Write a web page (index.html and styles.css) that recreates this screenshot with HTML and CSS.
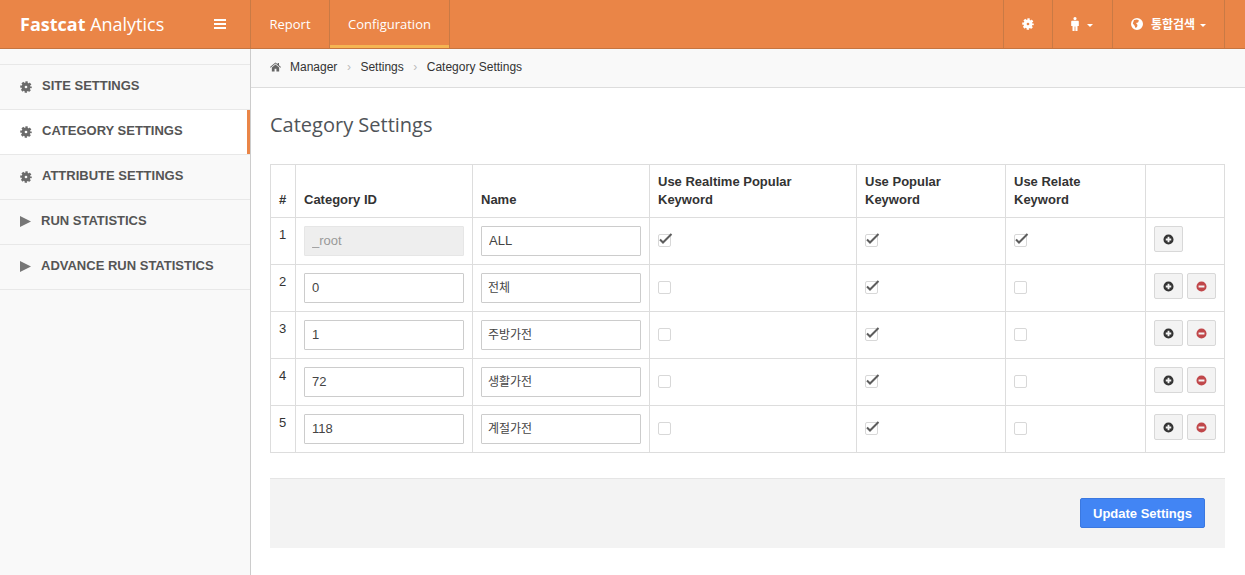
FILE: index.html
```html
<!DOCTYPE html>
<html lang="ko">
<head>
<meta charset="utf-8">
<title>Fastcat Analytics</title>
<link rel="stylesheet" href="styles.css">
</head>
<body>
<svg class="defs" width="0" height="0" aria-hidden="true">
  <defs>
    <symbol id="gear" viewBox="0 0 16 16">
      <circle cx="8" cy="8" r="3.900" fill="none" stroke="currentColor" stroke-width="4.200" />
      <circle cx="8" cy="8" r="6.200" fill="none" stroke="currentColor" stroke-width="3" stroke-dasharray="2.900 1.970" stroke-dashoffset="1.450" />
    </symbol>
    <symbol id="play" viewBox="0 0 11 11"><path d="M0 0 11 5.500 0 11z" fill="currentColor"/></symbol>
    <symbol id="plus" viewBox="0 0 12 12"><path fill="currentColor" fill-rule="evenodd" d="M6 .5a5.500 5.500 0 1 0 0 11 5.500 5.500 0 0 0 0-11zM5 3h2v2h2v2H7v2H5V7H3V5h2z"/></symbol>
    <symbol id="minus" viewBox="0 0 12 12"><path fill="currentColor" fill-rule="evenodd" d="M6 .5a5.500 5.500 0 1 0 0 11 5.500 5.500 0 0 0 0-11zM2.800 5h6.400v2H2.800z"/></symbol>
    <symbol id="tick" viewBox="0 0 15 13"><path d="M2 7.500 5 10.500 13.500 2" fill="none" stroke="currentColor" stroke-width="2"/></symbol>
  </defs>
</svg>

<header class="topbar">
  <div class="brand">
    <span class="logo"><b>Fastcat</b> Analytics</span>
    <svg class="bars" viewBox="0 0 12 10" width="12" height="10"><path d="M0 0h12v2H0zM0 4h12v2H0zM0 8h12v2H0z" fill="currentColor"/></svg>
  </div>
  <nav class="nav">
    <a class="nav-link nav-report">Report</a>
    <a class="nav-link nav-config is-active">Configuration</a>
  </nav>
  <div class="tools">
    <a class="tool tool-gear"><svg class="ico-12"><use href="#gear"/></svg></a>
    <a class="tool tool-user">
      <svg viewBox="1 0 8 14" width="8" height="14"><path fill="currentColor" d="M5 0a1.600 1.600 0 1 1 0 3.200A1.600 1.600 0 0 1 5 0zM2.300 3.800h5.400c.7 0 1.100.4 1.100 1V9H7.500v5H5.400V9.500h-.8V14H2.500V9H1.200V4.800c0-.6.400-1 1.100-1z"/></svg>
      <i class="caret"></i>
    </a>
    <a class="tool tool-search">
      <svg viewBox="0 0 12 12" width="12" height="12"><path fill="currentColor" fill-rule="evenodd" d="M6 0a6 6 0 1 0 0 12A6 6 0 0 0 6 0zM3 2 6 1.500 8 2.500 7 4.500 5 5 6.500 7 6 9 4.500 10 3.500 7.500 1.800 5.500z"/></svg>
      <span class="tool-text">통합검색</span>
      <i class="caret"></i>
    </a>
  </div>
</header>

<div class="layout">
  <aside class="sidebar">
    <ul class="menu">
      <li class="menu-item"><svg class="menu-gear"><use href="#gear"/></svg>SITE SETTINGS</li>
      <li class="menu-item is-active"><svg class="menu-gear"><use href="#gear"/></svg>CATEGORY SETTINGS</li>
      <li class="menu-item"><svg class="menu-gear"><use href="#gear"/></svg>ATTRIBUTE SETTINGS</li>
      <li class="menu-item"><svg class="menu-play"><use href="#play"/></svg>RUN STATISTICS</li>
      <li class="menu-item"><svg class="menu-play"><use href="#play"/></svg>ADVANCE RUN STATISTICS</li>
    </ul>
  </aside>

  <main class="main">
    <div class="crumbs">
      <svg class="home" viewBox="0 0 12 10" width="11" height="10"><path fill="currentColor" d="M6 0 0 5l.6.700L6 1.300l5.400 4.400L12 5 9.800 3.200V.6H8.300v1.300zM6 2.200 2 5.500V10h3V7h2v3h3V5.500z"/></svg>
      <span class="crumb">Manager</span><span class="sep">›</span>
      <span class="crumb">Settings</span><span class="sep">›</span>
      <span class="crumb">Category Settings</span>
    </div>
    <div class="content">
      <h1 class="title">Category Settings</h1>
      <table class="grid">
        <colgroup>
          <col class="c-num"><col class="c-id"><col class="c-name"><col class="c-real"><col class="c-pop"><col class="c-rel"><col class="c-act">
        </colgroup>
        <thead>
          <tr>
            <th>#</th><th>Category ID</th><th>Name</th>
            <th>Use Realtime Popular<br>Keyword</th>
            <th>Use Popular<br>Keyword</th>
            <th>Use Relate<br>Keyword</th>
            <th></th>
          </tr>
        </thead>
        <tbody>
          <tr>
            <td>1</td>
            <td><input class="field" value="_root" disabled></td>
            <td><input class="field" value="ALL"></td>
            <td class="cc"><span class="check"><svg class="tick"><use href="#tick"/></svg></span></td>
            <td class="cc"><span class="check"><svg class="tick"><use href="#tick"/></svg></span></td>
            <td class="cc"><span class="check"><svg class="tick"><use href="#tick"/></svg></span></td>
            <td><div class="acts"><button class="btn"><svg class="btn-ico"><use href="#plus"/></svg></button></div></td>
          </tr>
          <tr>
            <td>2</td>
            <td><input class="field" value="0"></td>
            <td><input class="field field-ko" value="전체"></td>
            <td class="cc"><span class="check"></span></td>
            <td class="cc"><span class="check"><svg class="tick"><use href="#tick"/></svg></span></td>
            <td class="cc"><span class="check"></span></td>
            <td><div class="acts"><button class="btn"><svg class="btn-ico"><use href="#plus"/></svg></button><button class="btn btn-del"><svg class="btn-ico"><use href="#minus"/></svg></button></div></td>
          </tr>
          <tr>
            <td>3</td>
            <td><input class="field" value="1"></td>
            <td><input class="field field-ko" value="주방가전"></td>
            <td class="cc"><span class="check"></span></td>
            <td class="cc"><span class="check"><svg class="tick"><use href="#tick"/></svg></span></td>
            <td class="cc"><span class="check"></span></td>
            <td><div class="acts"><button class="btn"><svg class="btn-ico"><use href="#plus"/></svg></button><button class="btn btn-del"><svg class="btn-ico"><use href="#minus"/></svg></button></div></td>
          </tr>
          <tr>
            <td>4</td>
            <td><input class="field" value="72"></td>
            <td><input class="field field-ko" value="생활가전"></td>
            <td class="cc"><span class="check"></span></td>
            <td class="cc"><span class="check"><svg class="tick"><use href="#tick"/></svg></span></td>
            <td class="cc"><span class="check"></span></td>
            <td><div class="acts"><button class="btn"><svg class="btn-ico"><use href="#plus"/></svg></button><button class="btn btn-del"><svg class="btn-ico"><use href="#minus"/></svg></button></div></td>
          </tr>
          <tr>
            <td>5</td>
            <td><input class="field" value="118"></td>
            <td><input class="field field-ko" value="계절가전"></td>
            <td class="cc"><span class="check"></span></td>
            <td class="cc"><span class="check"><svg class="tick"><use href="#tick"/></svg></span></td>
            <td class="cc"><span class="check"></span></td>
            <td><div class="acts"><button class="btn"><svg class="btn-ico"><use href="#plus"/></svg></button><button class="btn btn-del"><svg class="btn-ico"><use href="#minus"/></svg></button></div></td>
          </tr>
        </tbody>
      </table>
      <div class="form-actions"><button class="primary">Update Settings</button></div>
    </div>
  </main>
</div>
</body>
</html>
```
FILE: styles.css
```css
* { box-sizing: border-box; }
html, body { margin: 0; height: 100%; overflow: hidden; }
body {
  font-family: "Liberation Sans", "Noto Sans CJK KR", Arial, sans-serif;
  font-size: 13px;
  color: #333;
  background: #fff;
  display: flex;
  flex-direction: column;
}
.defs { position: absolute; }

/* top bar */
.topbar {
  flex: 0 0 49px;
  display: flex;
  background: #ea8547;
  border-bottom: 1px solid #c57440;
  color: #fff;
  font-family: "Open Sans", "Noto Sans CJK KR", sans-serif;
}
.brand {
  flex: 0 0 251px;
  display: flex;
  align-items: center;
  justify-content: space-between;
  padding: 0 24px 0 20px;
  border-right: 1px solid #c97a45;
}
.logo { font-size: 18px; line-height: 48px; }
.logo b { font-weight: 700; }
.bars { color: #fff; margin-bottom: 1px; }
.nav { display: flex; }
.nav-link {
  display: flex;
  align-items: center;
  justify-content: center;
  font-size: 13px;
  border-right: 1px solid #c97a45;
  height: 48px;
}
.nav-report { width: 79px; }
.nav-config { width: 120px; }
.nav-link.is-active { box-shadow: inset 0 -3px 0 #f6b552; }
.tools { margin-left: auto; display: flex; margin-right: 20px; }
.tool {
  display: flex;
  align-items: center;
  height: 48px;
  border-left: 1px solid #c97a45;
}
.tool-gear { width: 49px; justify-content: center; }
.tool-user { width: 60px; padding-left: 18px; gap: 8px; }
.tool-search { width: 113px; padding-left: 18px; gap: 8px; border-right: 1px solid #c97a45; }
.tool-text { font-size: 12px; font-weight: 700; margin-right: -3px; }
.ico-12 { width: 12px; height: 12px; }
.caret {
  width: 0;
  height: 0;
  margin-top: 2px;
  border-left: 3px solid transparent;
  border-right: 3px solid transparent;
  border-top: 3px solid #fff;
}

/* layout */
.layout { flex: 1; display: flex; min-height: 0; }
.sidebar {
  flex: 0 0 251px;
  background: #f9f9f9;
  border-right: 1px solid #ccc;
  padding-top: 15px;
}
.menu {
  list-style: none;
  margin: 0;
  padding: 0;
  border-top: 1px solid #e8e8e8;
}
.menu-item {
  height: 45px;
  padding: 0 0 3px 20px;
  display: flex;
  align-items: center;
  border-bottom: 1px solid #e8e8e8;
  font-weight: 700;
  font-size: 13px;
  color: #555;
}
.menu-item.is-active {
  background: #fff;
  box-shadow: inset -3px 0 0 #ea8547;
}
.menu-gear { width: 12px; height: 12px; margin: 3px 10px 0 0; color: #6b6b6b; }
.menu-play { width: 11px; height: 11px; margin: 1px 10px 0 0; color: #777; }

/* main */
.main { flex: 1; min-width: 0; }
.crumbs {
  height: 39px;
  padding: 0 20px 3px 19px;
  display: flex;
  align-items: center;
  background: #f9f9f9;
  border-bottom: 1px solid #ddd;
  font-size: 12px;
  color: #333;
}
.home { color: #666; margin-right: 9px; }
.sep { color: #bbb; margin: 0 9.5px; font-size: 12px; }
.content { padding: 0 20px 0 19px; }
.title {
  margin: 0;
  padding: 23px 0 26px;
  font-family: "Open Sans", sans-serif;
  font-weight: 400;
  font-size: 20px;
  line-height: 27px;
  color: #4f5459;
}

/* table */
.grid {
  width: 954px;
  table-layout: fixed;
  border-collapse: collapse;
  font-size: 13px;
}
.c-num { width: 25px; }
.c-id { width: 177px; }
.c-name { width: 177px; }
.c-real { width: 207px; }
.c-pop { width: 149px; }
.c-rel { width: 140px; }
.c-act { width: 79px; }
.grid th, .grid td {
  border: 1px solid #ddd;
  padding: 8px;
  text-align: left;
  line-height: 18px;
  color: #333;
}
.grid th { vertical-align: bottom; font-weight: 700; height: 53px; padding-bottom: 8px; }
.grid td { vertical-align: top; height: 47px; line-height: 17px; }
.grid td.cc { vertical-align: top; padding-top: 16px; }
.field {
  display: block;
  width: 160px;
  height: 30px;
  padding: 0 7px 2px;
  border: 1px solid #ccc;
  font: inherit;
  font-size: 13px;
  color: #444;
  background: #fff;
  border-radius: 1px;
}
.field-ko { font-size: 12px; padding-bottom: 3px; padding-left: 6px; }
.field:disabled { background: #eee; color: #999; border-color: #e6e6e6; }
.check {
  display: block;
  position: relative;
  width: 13px;
  height: 13px;
  border: 1px solid #d8d8d8;
  border-radius: 2px;
  background: #fff;
}
.tick {
  position: absolute;
  left: -1px;
  top: -3px;
  width: 15px;
  height: 13px;
  color: #5d5d5d;
}
.acts { display: flex; gap: 4px; }
.btn {
  width: 29px;
  height: 26px;
  padding: 0;
  display: flex;
  align-items: center;
  justify-content: center;
  background: #f3f3f3;
  border: 1px solid #d8d8d8;
  border-radius: 2px;
  color: #333;
}
.btn-del { color: #c0474a; }
.btn-ico { width: 11px; height: 11px; }

.form-actions {
  margin-top: 25px;
  height: 70px;
  background: #f3f3f3;
  border-top: 1px solid #e5e5e5;
  display: flex;
  justify-content: flex-end;
  padding: 19px 20px 0 0;
}
.primary {
  width: 125px;
  height: 30px;
  padding: 0;
  background: #4285f4;
  border: 1px solid #3b78e0;
  border-radius: 2px;
  color: #fff;
  font: 700 13px "Liberation Sans", Arial, sans-serif;
}
```
